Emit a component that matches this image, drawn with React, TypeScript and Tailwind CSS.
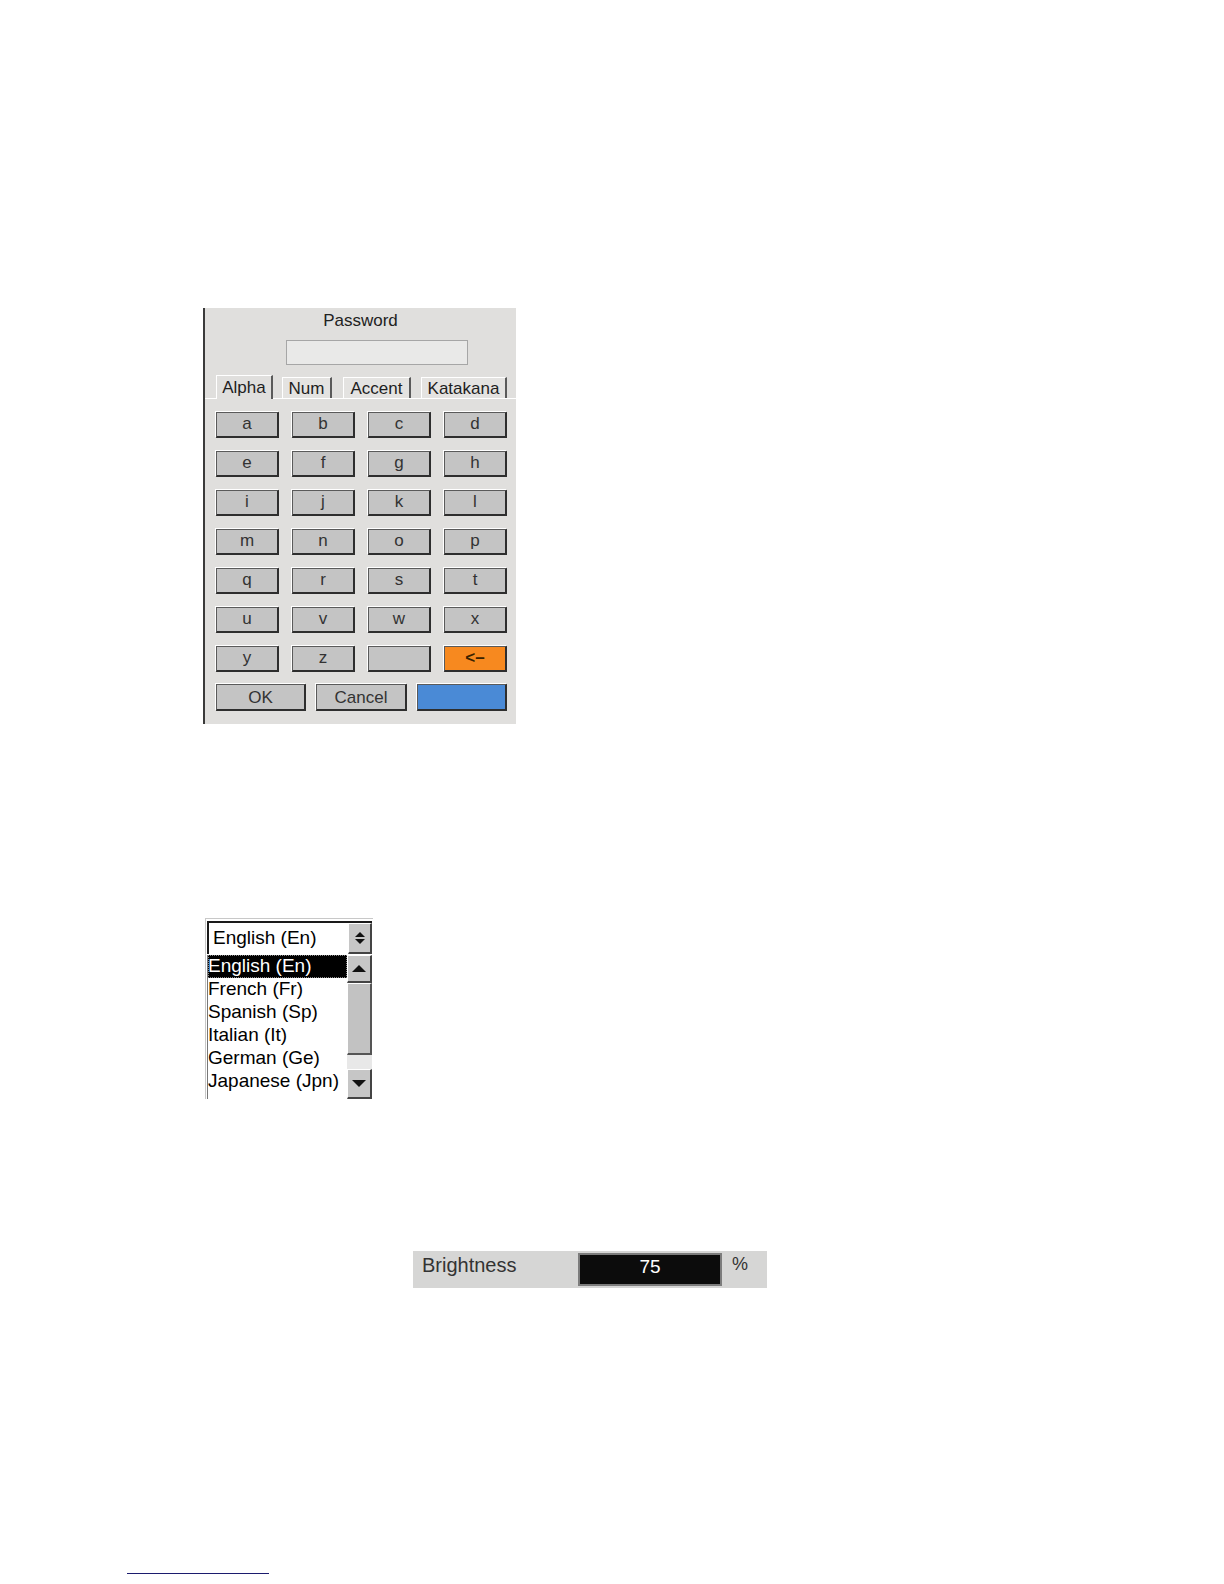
import React from "react";

const keys = [
  ["a", "b", "c", "d"],
  ["e", "f", "g", "h"],
  ["i", "j", "k", "l"],
  ["m", "n", "o", "p"],
  ["q", "r", "s", "t"],
  ["u", "v", "w", "x"],
  ["y", "z", "", "<–"],
];

const keyBase =
  "flex items-center justify-center border-t border-l border-[#5a5a5a] border-r-2 border-b-2 border-r-[#2e2e2e] border-b-[#2e2e2e] shadow-[-1px_-1px_0_#ffffff] text-[17px] leading-none";

function Key({ label }: { label: string }) {
  const orange = label === "<–";
  return (
    <div
      className={
        keyBase +
        (orange ? " bg-[#f7891f] text-[#3a2200] font-bold" : " bg-[#c4c4c4] text-[#333333]")
      }
    >
      <span className="-mt-[2px]">{label}</span>
    </div>
  );
}

function Tab({ label, w, active }: { label: string; w: string; active?: boolean }) {
  return (
    <div
      className={
        "flex items-center justify-center border-t border-l border-white border-r-2 border-r-[#5a5a5a] text-[17px] leading-none text-[#1e1e1e] " +
        w +
        (active ? " h-[24px] bg-[#e0dfdd] -mb-px" : " h-[21px] bg-[#e4e3e1]")
      }
    >
      {label}
    </div>
  );
}

function TriUp({ size = 8 }: { size?: number }) {
  return (
    <svg width={size * 2} height={size} viewBox="0 0 16 8">
      <polygon points="0,8 8,0 16,8" fill="#111" />
    </svg>
  );
}
function TriDown({ size = 8 }: { size?: number }) {
  return (
    <svg width={size * 2} height={size} viewBox="0 0 16 8">
      <polygon points="0,0 16,0 8,8" fill="#111" />
    </svg>
  );
}

const langs = [
  "English (En)",
  "French (Fr)",
  "Spanish (Sp)",
  "Italian (It)",
  "German (Ge)",
  "Japanese (Jpn)",
];

export default function App() {
  return (
    <div className="w-[1224px] h-[1584px] bg-white flex flex-col font-['Liberation_Sans',Arial,sans-serif] pt-[308px]">
      {/* Password keyboard panel */}
      <div className="ml-[203px] w-[313px] h-[416px] bg-[#e0dfdd] border-l-2 border-[#3a3a3a] flex flex-col">
        <div className="pt-[3px] h-[23px] text-center text-[17px] leading-[20px] text-[#222]">Password</div>
        <div className="mt-[9px] ml-[81px] w-[182px] h-[25px] border border-[#a6a6a6] bg-[#e9e9e8]" />
        <div className="mt-[11px] h-[23px] flex items-end border-b border-white pl-[11px]">
          <Tab label="Alpha" w="w-[57px]" active />
          <div className="w-[9px]" />
          <Tab label="Num" w="w-[50px]" />
          <div className="w-[11px]" />
          <Tab label="Accent" w="w-[68px]" />
          <div className="w-[10px]" />
          <Tab label="Katakana" w="w-[86px]" />
        </div>
        <div className="mt-[13px] ml-[11px] grid grid-cols-[repeat(4,63px)] auto-rows-[26px] gap-x-[13px] gap-y-[13px]">
          {keys.flat().map((k, i) => (
            <Key key={i} label={k} />
          ))}
        </div>
        <div className="mt-[12px] ml-[11px] flex gap-[10px] h-[27px]">
          <div className={keyBase + " w-[90px] bg-[#c4c4c4] text-[#333]"}>OK</div>
          <div className={keyBase + " w-[91px] bg-[#c4c4c4] text-[#333]"}>Cancel</div>
          <div className={keyBase + " w-[90px] bg-[#4a8ad6]"} />
        </div>
      </div>

      {/* Language dropdown */}
      <div className="mt-[194px] ml-[205px] w-[168px] border-t border-l border-[#c8c8c8] flex flex-col pl-[1px] pt-[2px]">
        <div className="h-[33px] w-[165px] flex bg-white border-t-2 border-l-2 border-[#1a1a1a]">
          <div className="flex-1 pl-[4px] text-[19px] leading-[29px] text-black">English (En)</div>
          <div className="w-[24px] bg-[#c6c6c6] border-t border-l border-white border-r-2 border-b-2 border-r-[#444] border-b-[#444] flex flex-col items-center justify-center gap-[2px]">
            <TriUp size={5} />
            <TriDown size={5} />
          </div>
        </div>
        <div className="mt-[1px] h-[144px] w-[165px] flex bg-white border-l border-[#777]">
          <div className="flex-1 flex flex-col text-[19px] leading-[22px] text-black">
            {langs.map((l, i) => (
              <div
                key={l}
                className={
                  "h-[23px] leading-[21px] whitespace-nowrap " +
                  (i === 0 ? "bg-black text-white outline-1 outline-dotted outline-[#888] -outline-offset-1" : "")
                }
              >
                {l}
              </div>
            ))}
          </div>
          <div className="w-[25px] flex flex-col bg-[#e8e8e8]">
            <div className="h-[28px] bg-[#c6c6c6] border-t border-l border-white border-r-2 border-b-2 border-r-[#444] border-b-[#444] flex items-center justify-center">
              <TriUp size={7} />
            </div>
            <div className="h-[72px] bg-[#c2c2c2] border-t border-l border-white border-r-2 border-b-2 border-r-[#555] border-b-[#555]" />
            <div className="h-[14px]" />
            <div className="flex-1 bg-[#c6c6c6] border-t border-l border-white border-r-2 border-b-2 border-r-[#444] border-b-[#444] flex items-center justify-center">
              <TriDown size={7} />
            </div>
          </div>
        </div>
      </div>

      {/* Brightness */}
      <div className="mt-[152px] ml-[413px] w-[354px] h-[37px] bg-[#d6d6d5] flex items-start">
        <div className="pl-[9px] pt-[3px] w-[165px] text-[20px] leading-[22px] text-[#333]">Brightness</div>
        <div className="mt-[2px] w-[144px] h-[33px] bg-[#0c0c0c] border-2 border-[#7c7c7c] flex justify-center text-white text-[19px] leading-[22px] pt-[1px]">
          75
        </div>
        <div className="ml-[10px] pt-[2px] text-[18px] leading-[22px] text-[#333]">%</div>
      </div>

      {/* footnote rule */}
      <div className="mt-[285px] ml-[127px] w-[142px] h-px bg-[#1c1c6e]" />
    </div>
  );
}
